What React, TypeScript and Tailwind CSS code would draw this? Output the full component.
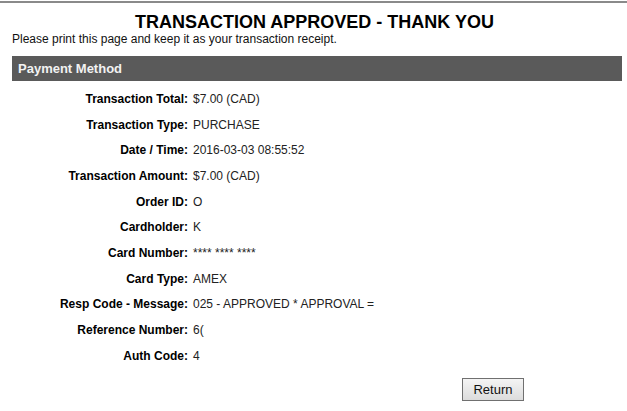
const ROWS: [string, string][] = [
  ['Transaction Total:', '$7.00 (CAD)'],
  ['Transaction Type:', 'PURCHASE'],
  ['Date / Time:', '2016-03-03 08:55:52'],
  ['Transaction Amount:', '$7.00 (CAD)'],
  ['Order ID:', 'O'],
  ['Cardholder:', 'K'],
  ['Card Number:', '**** **** ****'],
  ['Card Type:', 'AMEX'],
  ['Resp Code - Message:', '025 - APPROVED * APPROVAL ='],
  ['Reference Number:', '6('],
  ['Auth Code:', '4'],
]

export default function App() {
  return (
    <div className="w-[627px] h-[411px] bg-white overflow-hidden text-black font-['Liberation_Sans',Arial,sans-serif]">
      <div className="mt-px h-[2px] bg-[#8a8a8a]" />

      <h1 className="mt-[9px] text-center text-[18px] leading-[20px] font-bold pl-[2px]">
        TRANSACTION APPROVED - THANK YOU
      </h1>
      <p className="ml-[12px] text-[12px] leading-[14px] text-[#111]">
        Please print this page and keep it as your transaction receipt.
      </p>

      <div className="mt-[10px] ml-[12px] w-[610px] h-[25px] bg-[#5a5a5a] flex items-center px-[6px]">
        <span className="text-[13px] font-bold text-[#f2f2f2]">Payment Method</span>
      </div>

      <div className="mt-[5px] flex flex-col">
        {ROWS.map(([label, value]) => (
          <div key={label} className="flex h-[25.7px] items-center text-[12px]">
            <span className="w-[188px] text-right font-bold">{label}</span>
            <span className="ml-[5px] text-[#222]">{value}</span>
          </div>
        ))}
      </div>

      <div className="mt-[8px] ml-[462px]">
        <button className="w-[62px] h-[23px] border border-[#707070] bg-gradient-to-b from-[#f4f4f4] to-[#dcdcdc] text-[13px] text-[#111] font-['Liberation_Sans',Arial,sans-serif]">
          Return
        </button>
      </div>
    </div>
  )
}
